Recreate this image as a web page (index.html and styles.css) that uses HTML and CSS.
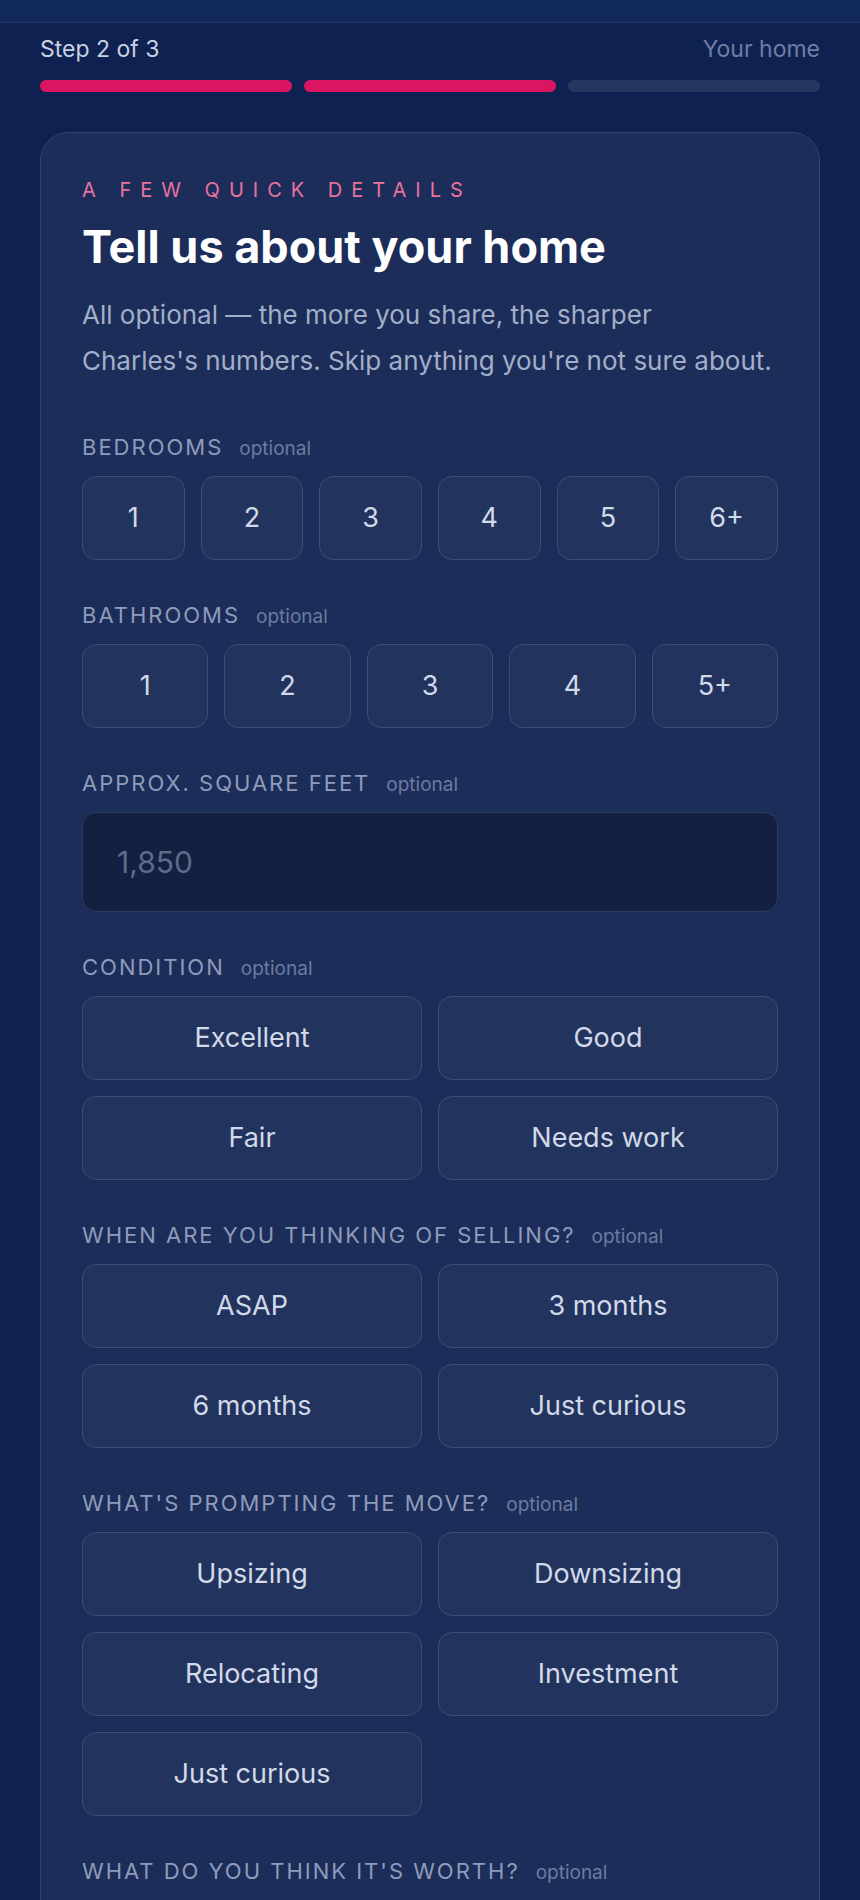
FILE: index.html
```html
<!doctype html>
<html>
    <head>
        <meta charset="UTF-8">
        <meta name="viewport" content="width=device-width, initial-scale=1">
        <title>Your home - Step 2 of 3</title>
        <link rel="stylesheet" href="styles.css">
    </head>
    <body>
        <header class="topbar"></header>

        <div class="progress">
            <div class="progress-head">
                <span class="step">Step 2 of 3</span>
                <span class="step-name">Your home</span>
            </div>
            <div class="bars">
                <span class="bar done"></span>
                <span class="bar done"></span>
                <span class="bar"></span>
            </div>
        </div>

        <main class="card">
            <p class="eyebrow">A few quick details</p>
            <h1>Tell us about your home</h1>
            <p class="lede">
                All optional — the more you share, the sharper<br>
                Charles's numbers. Skip anything you're not sure about.
            </p>

            <section class="field">
                <div class="label">Bedrooms <span class="opt">optional</span></div>
                <div class="choices six">
                    <button class="choice">1</button>
                    <button class="choice">2</button>
                    <button class="choice">3</button>
                    <button class="choice">4</button>
                    <button class="choice">5</button>
                    <button class="choice">6+</button>
                </div>
            </section>

            <section class="field">
                <div class="label">Bathrooms <span class="opt">optional</span></div>
                <div class="choices five">
                    <button class="choice">1</button>
                    <button class="choice">2</button>
                    <button class="choice">3</button>
                    <button class="choice">4</button>
                    <button class="choice">5+</button>
                </div>
            </section>

            <section class="field">
                <div class="label">Approx. square feet <span class="opt">optional</span></div>
                <input class="text-input" type="text" placeholder="1,850">
            </section>

            <section class="field">
                <div class="label">Condition <span class="opt">optional</span></div>
                <div class="choices two">
                    <button class="choice">Excellent</button>
                    <button class="choice">Good</button>
                    <button class="choice">Fair</button>
                    <button class="choice">Needs work</button>
                </div>
            </section>

            <section class="field">
                <div class="label">When are you thinking of selling? <span class="opt">optional</span></div>
                <div class="choices two">
                    <button class="choice">ASAP</button>
                    <button class="choice">3 months</button>
                    <button class="choice">6 months</button>
                    <button class="choice">Just curious</button>
                </div>
            </section>

            <section class="field">
                <div class="label">What's prompting the move? <span class="opt">optional</span></div>
                <div class="choices two">
                    <button class="choice">Upsizing</button>
                    <button class="choice">Downsizing</button>
                    <button class="choice">Relocating</button>
                    <button class="choice">Investment</button>
                    <button class="choice">Just curious</button>
                </div>
            </section>

            <section class="field">
                <div class="label">What do you think it's worth? <span class="opt">optional</span></div>
            </section>
        </main>
    </body>
</html>
```

FILE: styles.css
```css
:root {
    --page: #0f2150;
    --card: #1c2d5a;
    --chip: #22345e;
    --chip-line: #3b4d78;
    --pink: #dc1562;
    --muted: #8f9bb9;
}

html, body {
    margin: 0;
    background-color: var(--page);
}

* {
    font-family: Inter, "Noto Sans", sans-serif;
    box-sizing: border-box;
}

.topbar {
    height: 23px;
    background-color: #11295b;
    border-bottom: 1px solid #263b6b;
}

.progress {
    padding: 13px 40px 0;
}

.progress-head {
    display: flex;
    justify-content: space-between;
    font-size: 23px;
    line-height: 1.2;
}

.step {
    color: #c9d1e3;
}

.step-name {
    color: #6f7ea5;
}

.bars {
    display: flex;
    gap: 12px;
    margin-top: 16px;
}

.bar {
    flex: 1;
    height: 12px;
    border-radius: 6px;
    background-color: #25375f;
}

.bar.done {
    background-color: var(--pink);
}

.card {
    margin: 40px 40px 0;
    padding: 45px 41px 60px;
    background-color: var(--card);
    border: 1px solid #2f4271;
    border-radius: 28px;
}

.eyebrow {
    margin: 0;
    font-size: 20px;
    line-height: 24px;
    letter-spacing: 9px;
    text-transform: uppercase;
    color: #e8739f;
}

h1 {
    margin: 18px 0 0;
    font-size: 45px;
    line-height: 1.2;
    font-weight: 700;
    color: #fff;
}

.lede {
    margin: 18px 0 0;
    font-size: 26px;
    line-height: 46px;
    color: #a3aec8;
}

.field {
    margin-top: 42px;
}

.lede + .field {
    margin-top: 50px;
}

.label {
    display: flex;
    align-items: baseline;
    gap: 16px;
    height: 26px;
    margin-bottom: 16px;
    font-size: 22px;
    line-height: 26px;
    letter-spacing: 2px;
    text-transform: uppercase;
    color: var(--muted);
}

.opt {
    font-size: 19px;
    line-height: 20px;
    letter-spacing: 0;
    text-transform: none;
    color: #6d7ba0;
}

.choices {
    display: grid;
    gap: 16px;
}

.choices.six { grid-template-columns: repeat(6, 1fr); }
.choices.five { grid-template-columns: repeat(5, 1fr); }
.choices.two { grid-template-columns: repeat(2, 1fr); }

.choice {
    height: 84px;
    padding: 0;
    background-color: var(--chip);
    border: 1.5px solid var(--chip-line);
    border-radius: 14px;
    color: #d2d9e8;
    font-size: 27px;
}

.text-input {
    display: block;
    width: 100%;
    height: 100px;
    padding: 0 34px;
    background-color: #13203f;
    border: 1.5px solid #2c3b60;
    border-radius: 14px;
    color: #d2d9e8;
    font-size: 30px;
    outline: none;
}

.text-input::placeholder {
    color: #5d6b8d;
}
```
